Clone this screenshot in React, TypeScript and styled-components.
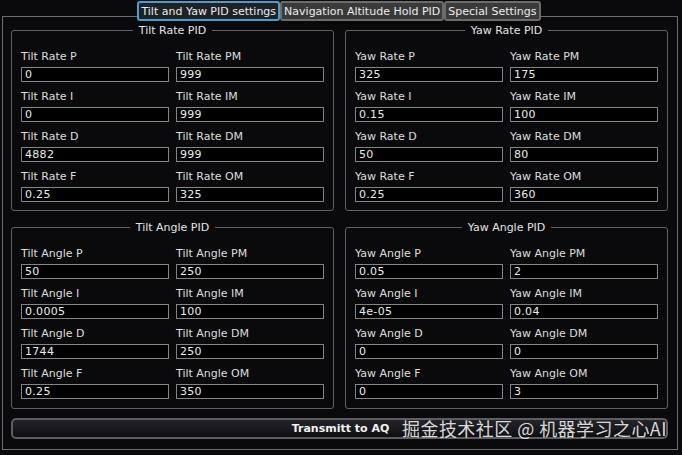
import React from 'react';
import styled, { createGlobalStyle } from 'styled-components';

const GlobalStyle = createGlobalStyle`
  html, body {
    margin: 0;
    padding: 0;
    background: #0a0a0c;
  }
  * {
    box-sizing: border-box;
  }
`;

const Window = styled.div`
  position: relative;
  width: 682px;
  height: 455px;
  display: flex;
  flex-direction: column;
  background: #0a0a0c;
  font-family: 'DejaVu Sans', 'Noto Sans', sans-serif;
  color: #e2e2e2;
  overflow: hidden;
`;

const TabBar = styled.div`
  position: relative;
  z-index: 1;
  display: flex;
  justify-content: center;
  margin: 1px 0 -5px 0;
  padding-right: 4px;
`;

const Tab = styled.div<{ $active?: boolean }>`
  height: 20px;
  padding: 0 2px;
  display: flex;
  align-items: center;
  font-size: 11px;
  color: #ececec;
  white-space: nowrap;
  border-radius: 3px;
  border: ${(p) => (p.$active ? '2px solid #4a9fca' : '2px solid #6c6c6c')};
  background: ${(p) => (p.$active ? '#1e2226' : '#3a3a3b')};
`;

const Pane = styled.div`
  margin-left: 2px;
  width: 676px;
  height: 434px;
  border: 1px solid #6e6e6e;
  padding: 7px 9px 10px 8px;
  display: flex;
  flex-direction: column;
`;

const GroupGrid = styled.div`
  display: grid;
  grid-template-columns: 323px 323px;
  grid-template-rows: 187px 188px;
  column-gap: 11px;
  row-gap: 10px;
  flex-shrink: 0;
`;

const Group = styled.fieldset`
  margin: 0;
  min-width: 0;
  border: 1px solid #606060;
  border-radius: 3px;
  padding: 0 9px;
`;

const GroupTitle = styled.legend`
  margin: 0 auto;
  padding: 0 6px;
  font-size: 11px;
  line-height: 13px;
  color: #e4e4e4;
`;

const FieldGrid = styled.div`
  display: grid;
  grid-template-columns: 1fr 1fr;
  column-gap: 7px;
  row-gap: 8px;
  margin-top: 13px;
`;

const Field = styled.div`
  display: flex;
  flex-direction: column;
`;

const FieldLabel = styled.label`
  font-size: 11px;
  line-height: 14px;
  height: 14px;
  margin-bottom: 3px;
  color: #dedede;
  white-space: nowrap;
`;

const ValueBox = styled.div`
  height: 15px;
  border: 1px solid #858585;
  background: #000;
  padding: 0 3px;
  font-size: 11px;
  line-height: 13px;
  color: #ececec;
  letter-spacing: 0.3px;
  white-space: nowrap;
  overflow: hidden;
`;

const TransmitButton = styled.button`
  margin-top: 9px;
  height: 21px;
  flex-shrink: 0;
  width: 100%;
  border: 2px solid #5e5e62;
  border-radius: 5px;
  background: linear-gradient(#24242a, #0e0e12);
  color: #f2f2f2;
  font-family: 'DejaVu Sans', sans-serif;
  font-weight: bold;
  font-size: 11px;
  display: flex;
  align-items: center;
  justify-content: center;
  padding: 0 0 0 2px;
`;

const Watermark = styled.div`
  position: absolute;
  left: 402px;
  top: 416px;
  font-family: 'Noto Sans CJK SC', 'Noto Sans', sans-serif;
  font-size: 18px;
  letter-spacing: 0.45px;
  line-height: 24px;
  color: rgba(236, 236, 236, 0.92);
  white-space: nowrap;
  pointer-events: none;
`;

type Entry = [string, string];

interface GroupData {
  title: string;
  fields: Entry[];
}

const groups: GroupData[] = [
  {
    title: 'Tilt Rate PID',
    fields: [
      ['Tilt Rate P', '0'],
      ['Tilt Rate PM', '999'],
      ['Tilt Rate I', '0'],
      ['Tilt Rate IM', '999'],
      ['Tilt Rate D', '4882'],
      ['Tilt Rate DM', '999'],
      ['Tilt Rate F', '0.25'],
      ['Tilt Rate OM', '325'],
    ],
  },
  {
    title: 'Yaw Rate PID',
    fields: [
      ['Yaw Rate P', '325'],
      ['Yaw Rate PM', '175'],
      ['Yaw Rate I', '0.15'],
      ['Yaw Rate IM', '100'],
      ['Yaw Rate D', '50'],
      ['Yaw Rate DM', '80'],
      ['Yaw Rate F', '0.25'],
      ['Yaw Rate OM', '360'],
    ],
  },
  {
    title: 'Tilt Angle PID',
    fields: [
      ['Tilt Angle P', '50'],
      ['Tilt Angle PM', '250'],
      ['Tilt Angle I', '0.0005'],
      ['Tilt Angle IM', '100'],
      ['Tilt Angle D', '1744'],
      ['Tilt Angle DM', '250'],
      ['Tilt Angle F', '0.25'],
      ['Tilt Angle OM', '350'],
    ],
  },
  {
    title: 'Yaw Angle PID',
    fields: [
      ['Yaw Angle P', '0.05'],
      ['Yaw Angle PM', '2'],
      ['Yaw Angle I', '4e-05'],
      ['Yaw Angle IM', '0.04'],
      ['Yaw Angle D', '0'],
      ['Yaw Angle DM', '0'],
      ['Yaw Angle F', '0'],
      ['Yaw Angle OM', '3'],
    ],
  },
];

const tabs = ['Tilt and Yaw PID settings', 'Navigation Altitude Hold PID', 'Special Settings'];

const App: React.FC = () => {
  return (
    <Window>
      <GlobalStyle />
      <TabBar>
        {tabs.map((t, i) => (
          <Tab key={t} $active={i === 0}>
            {t}
          </Tab>
        ))}
      </TabBar>
      <Pane>
        <GroupGrid>
          {groups.map((g) => (
            <Group key={g.title}>
              <GroupTitle>{g.title}</GroupTitle>
              <FieldGrid>
                {g.fields.map(([label, value]) => (
                  <Field key={label}>
                    <FieldLabel>{label}</FieldLabel>
                    <ValueBox>{value}</ValueBox>
                  </Field>
                ))}
              </FieldGrid>
            </Group>
          ))}
        </GroupGrid>
        <TransmitButton>Transmitt to AQ</TransmitButton>
      </Pane>
      <Watermark>掘金技术社区 @ 机器学习之心AI</Watermark>
    </Window>
  );
};

export default App;
